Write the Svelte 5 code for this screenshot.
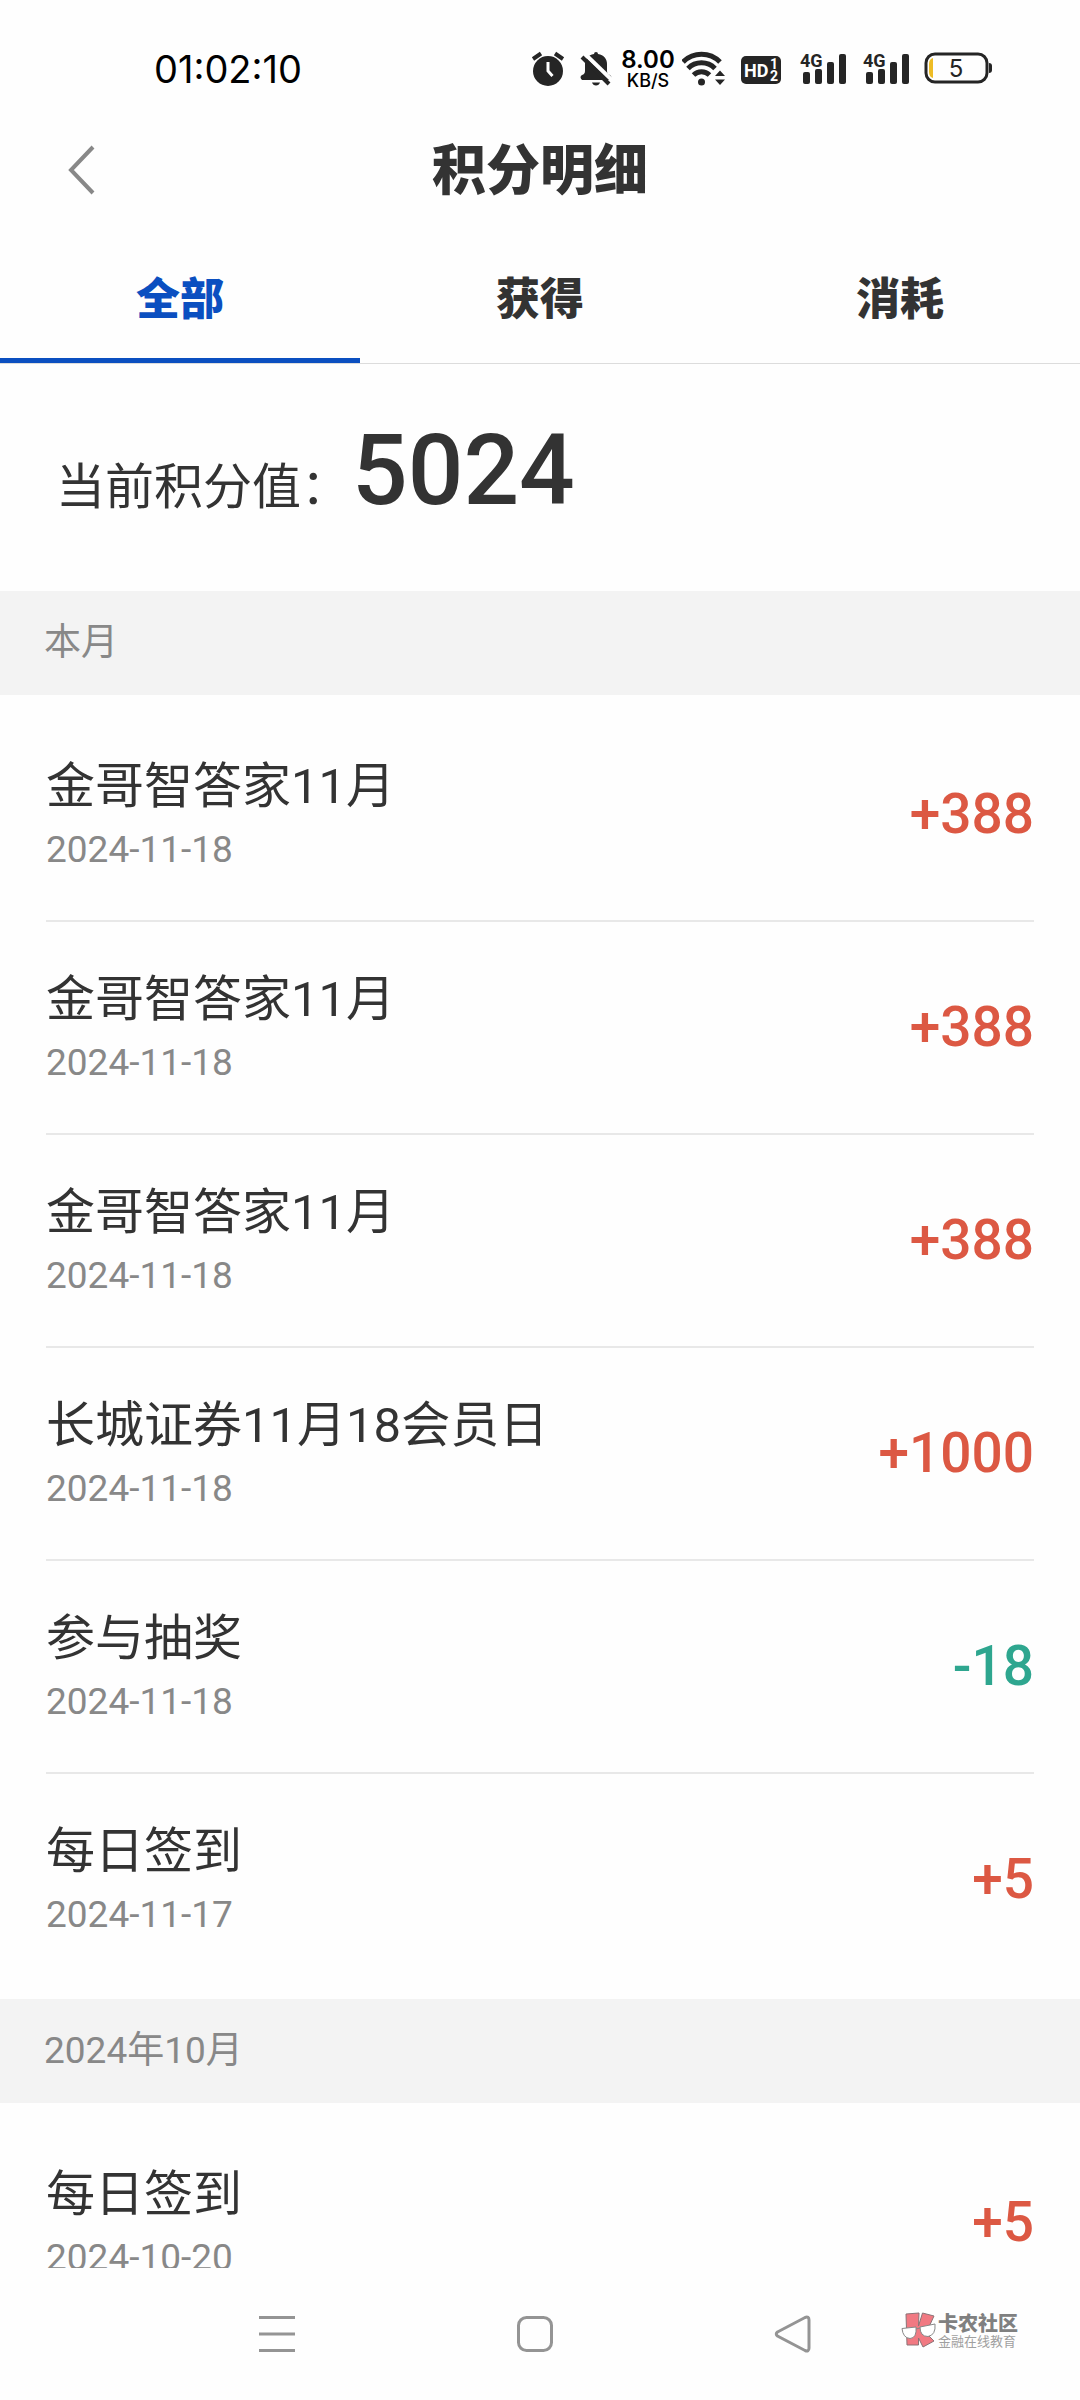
<script>
  const tabs = ['全部', '获得', '消耗'];
  let active = $state(0);

  const sections = [
    {
      label: '本月',
      items: [
        { title: '金哥智答家11月', date: '2024-11-18', amount: 388 },
        { title: '金哥智答家11月', date: '2024-11-18', amount: 388 },
        { title: '金哥智答家11月', date: '2024-11-18', amount: 388 },
        { title: '长城证券11月18会员日', date: '2024-11-18', amount: 1000 },
        { title: '参与抽奖', date: '2024-11-18', amount: -18 },
        { title: '每日签到', date: '2024-11-17', amount: 5 }
      ]
    },
    {
      label: '2024年10月',
      items: [{ title: '每日签到', date: '2024-10-20', amount: 5 }]
    }
  ];

  const format = (n) => (n > 0 ? `+${n}` : `${n}`);
</script>

{#snippet signal()}
  <svg class="status-icon" width="55" height="44" viewBox="0 0 55 44" aria-hidden="true">
    <text class="net" x="5" y="20">4G</text>
    <rect x="8" y="25" width="7" height="12" rx="2" />
    <rect x="20" y="22" width="7" height="15" rx="2" />
    <rect x="32" y="15" width="7" height="22" rx="2" />
    <rect x="44" y="7" width="7" height="30" rx="2" />
  </svg>
{/snippet}

<div class="screen">
  <div class="status">
    <time>01:02:10</time>
    <div class="status-icons">
      <svg class="status-icon" width="40" height="44" viewBox="0 0 40 44" aria-hidden="true">
        <circle cx="20" cy="24" r="15" />
        <path class="line" d="M5 12 13 6.500M27 6.500 35 12" />
        <path class="cut" d="M20 15v9l4.500 5" />
      </svg>
      <svg class="status-icon" width="38" height="44" viewBox="0 0 38 44" aria-hidden="true">
        <path d="M18 7q0-2 2-2t2 2c6 1 9 5 9 10v7q0 3 3 4 3 3 1 5H6q-3-3 0-5 3-1 3-4v-7c0-5 3-9 9-10zM16 35.500h8q-1 3-4 3t-4-3z" />
        <path class="slash-gap" d="M9 7 37 34" />
        <path class="slash" d="M6 10 33 37" />
      </svg>
      <div class="speed"><b>8.00</b><span>KB/S</span></div>
      <svg class="status-icon" width="48" height="44" viewBox="0 0 48 44" aria-hidden="true">
        <path class="wave" d="M1 15a26 26 0 0 1 37 0M6 21.500a19 19 0 0 1 27 0M11.500 28a11.500 11.500 0 0 1 16 0" />
        <circle cx="19.500" cy="35" r="3.500" />
        <path d="M33 29 38 23.500 43 29zM33 32.500h10L38 38z" />
      </svg>
      <svg class="status-icon" width="49" height="44" viewBox="0 0 49 44" aria-hidden="true">
        <rect x="3" y="9" width="40" height="28" rx="5" />
        <text class="hd" x="6" y="30">HD</text>
        <text class="sim" x="32" y="22">1</text>
        <text class="sim" x="32" y="34">2</text>
      </svg>
      {@render signal()}
      {@render signal()}
      <svg class="status-icon" width="72" height="44" viewBox="0 0 72 44" aria-hidden="true">
        <rect class="shell" x="5" y="7" width="61" height="28" rx="9" />
        <path d="M68 16q3 0 3 3v4q0 3-3 3z" />
        <path class="charge" d="M12 11v20q-4-1-4-6v-8q0-5 4-6z" />
        <text class="level" x="35" y="30">5</text>
      </svg>
    </div>
  </div>

  <header>
    <button class="back" aria-label="返回">
      <svg width="28" height="50" viewBox="0 0 28 50" aria-hidden="true"><path d="M25 2 3 25 25 48" /></svg>
    </button>
    <h1>积分明细</h1>
  </header>

  <nav class="tabs">
    {#each tabs as tab, i}
      <button class:active={active === i} onclick={() => (active = i)}>{tab}</button>
    {/each}
  </nav>

  <main>
    <p class="balance"><span>当前积分值：</span><strong>5024</strong></p>
    {#each sections as section}
      <section>
        <h2>{section.label}</h2>
        <ul>
          {#each section.items as item}
            <li>
              <div class="info">
                <h3>{item.title}</h3>
                <time>{item.date}</time>
              </div>
              <span class="amount" class:spent={item.amount < 0}>{format(item.amount)}</span>
            </li>
          {/each}
        </ul>
      </section>
    {/each}
  </main>

  <footer>
    <button aria-label="菜单">
      <svg width="40" height="40" viewBox="0 0 40 40" aria-hidden="true"><path d="M2 3.500h36M2 20h36M2 36.500h36" /></svg>
    </button>
    <button aria-label="主页">
      <svg width="40" height="40" viewBox="0 0 40 40" aria-hidden="true"><rect x="3.500" y="3.500" width="33" height="33" rx="8" /></svg>
    </button>
    <button aria-label="后退">
      <svg width="40" height="40" viewBox="0 0 40 40" aria-hidden="true"><path d="M4.500 18 32 3.500q4-1.500 4 2.500v28q0 4-4 2.500L4.500 22q-2.500-2 0-4z" /></svg>
    </button>
    <div class="mark">
      <svg width="36" height="36" viewBox="0 0 36 36" aria-hidden="true">
        <path class="k" d="M5 2 18 1 17.500 14 21.500 1 33 4 27 17 26 22 33 29 22 35 17.500 26 17.500 33 6 33z" />
        <path class="lens" d="M1 16.500 15 15q1 11-6 11.500Q2 26 1 16.500zM19 15 34 12q1 11-7 12.500-8 0-8-9.500z" />
        <path class="lens" d="M15 17 19 16" />
      </svg>
      <div class="mark-text"><b>卡农社区</b><span>金融在线教育</span></div>
    </div>
  </footer>
</div>

<style>
  :global(body) {
    margin: 0;
    background: #fefefe;
  }

  .screen {
    display: flex;
    flex-direction: column;
    height: 100vh;
    color: #333;
    font-family: Roboto, 'Noto Sans CJK SC', sans-serif;
  }

  button {
    padding: 0;
    border: 0;
    background: none;
    color: inherit;
    font: inherit;
  }

  h1, h2, h3, p, ul {
    margin: 0;
    padding: 0;
  }

  svg {
    display: block;
  }

  .status {
    display: flex;
    justify-content: space-between;
    align-items: center;
    padding: 47px 87px 24px 154px;
    color: #000;
    font-family: Inter, sans-serif;
  }

  .status time {
    font-size: 38px;
    line-height: 44px;
  }

  .status-icons {
    display: flex;
    gap: 8px;
  }

  .status-icon {
    fill: #252525;
  }

  .line, .cut, .slash, .slash-gap, .wave, .shell {
    fill: none;
    stroke: #252525;
    stroke-width: 4;
  }

  .wave {
    stroke-width: 5;
  }

  .cut {
    stroke: #fff;
    stroke-width: 3;
  }

  .slash-gap {
    stroke: #fefefe;
  }

  .shell {
    stroke-width: 3;
  }

  .charge {
    fill: #eebc25;
  }

  .net {
    font: 700 18px Roboto, sans-serif;
  }

  .hd {
    fill: #fff;
    font: 700 18px Roboto, sans-serif;
  }

  .sim {
    fill: #fff;
    font: 700 14px Roboto, sans-serif;
  }

  .level {
    font: 400 24px Inter, sans-serif;
    text-anchor: middle;
  }

  .speed {
    display: flex;
    flex-direction: column;
    align-items: center;
    width: 52px;
  }

  .speed b {
    font-size: 24px;
    font-weight: 600;
    line-height: 25px;
  }

  .speed span {
    font-size: 18px;
    font-weight: 500;
    line-height: 17px;
  }

  header {
    display: grid;
    grid-template-columns: 160px 1fr 160px;
    align-items: center;
    height: 110px;
  }

  .back {
    padding: 20px 68px;
  }

  .back path {
    fill: none;
    stroke: #888;
    stroke-width: 4;
  }

  h1 {
    padding-top: 4px;
    font-size: 54px;
    font-weight: 900;
    line-height: 64px;
    text-align: center;
  }

  .tabs {
    display: grid;
    grid-template-columns: repeat(3, 1fr);
    border-bottom: 1px solid #dcdcdc;
  }

  .tabs button {
    padding: 48px 0 31px;
    border-bottom: 5px solid transparent;
    font-size: 44px;
    font-weight: 900;
    line-height: 54px;
  }

  .tabs .active {
    border-color: #0b4fc0;
    color: #0b4fc0;
  }

  main {
    flex: 1;
    min-height: 0;
    overflow: hidden;
  }

  .balance {
    display: flex;
    align-items: baseline;
    gap: 2px;
    padding: 58px 56px 71px;
  }

  .balance span {
    font-size: 49px;
    line-height: 58px;
  }

  .balance strong {
    font-size: 98px;
    font-weight: 500;
    line-height: 98px;
  }

  h2 {
    padding: 30px 44px;
    background: #f3f3f3;
    color: #888;
    font-size: 37px;
    font-weight: 400;
    line-height: 44px;
  }

  ul {
    padding: 14px 46px 12px;
    list-style: none;
  }

  li {
    display: flex;
    justify-content: space-between;
    align-items: center;
    padding: 49px 0 51px;
    border-bottom: 2px solid #e8e8e8;
  }

  li:last-child {
    border-color: transparent;
  }

  .info {
    display: flex;
    flex-direction: column;
    gap: 15px;
  }

  h3 {
    font-size: 49px;
    font-weight: 400;
    line-height: 58px;
  }

  .info time {
    color: #888;
    font-size: 37px;
    line-height: 38px;
  }

  .amount {
    color: #dc5843;
    font-size: 55px;
    font-weight: 500;
    line-height: 58px;
  }

  .spent {
    color: #2ea68f;
  }

  footer {
    position: relative;
    display: flex;
    justify-content: center;
    align-items: center;
    gap: 218px;
    height: 132px;
    padding-right: 10px;
  }

  footer button path, footer button rect {
    fill: none;
    stroke: #949494;
    stroke-width: 3;
  }

  .mark {
    position: absolute;
    top: 44px;
    right: 62px;
    display: flex;
    gap: 1px;
  }

  .mark-text {
    display: flex;
    flex-direction: column;
    padding-top: 1px;
    color: #808080;
  }

  .mark b {
    font-size: 20px;
    font-weight: 900;
    line-height: 22px;
  }

  .mark span {
    color: #a0a0a0;
    font-size: 13px;
    line-height: 14px;
  }

  .k {
    fill: #f17982;
    stroke: #8b7377;
  }

  .lens {
    fill: #fff;
    stroke: #888;
  }
</style>
